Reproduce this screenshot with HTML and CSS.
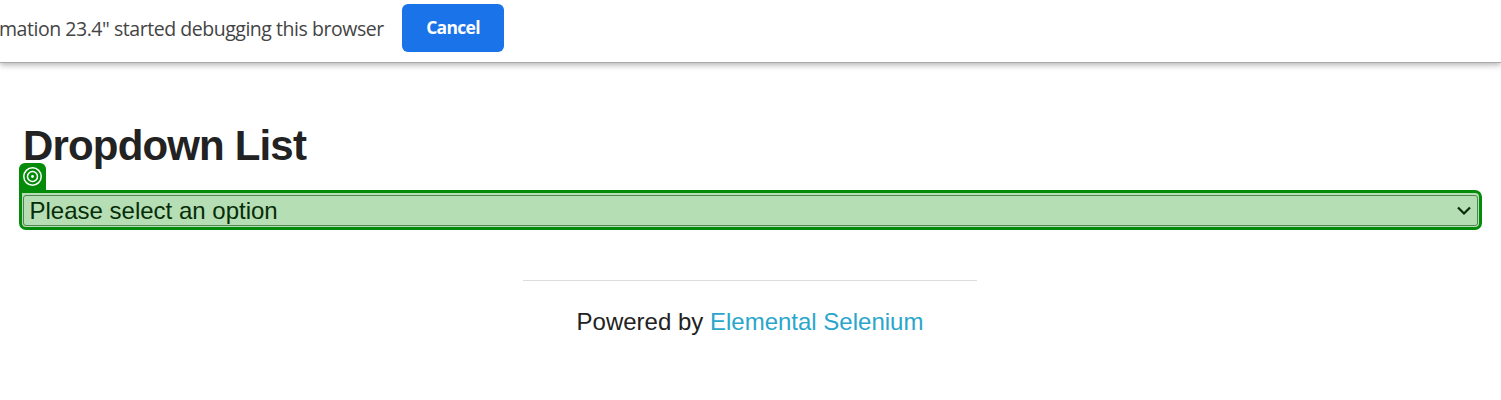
FILE: index.html
```html
<!DOCTYPE html>
<html lang="en">
<head>
<meta charset="utf-8">
<title>Dropdown List</title>
<link rel="stylesheet" href="styles.css">
</head>
<body>
<header class="infobar">
  <span class="infobar-text">mation 23.4" started debugging this browser</span>
  <button class="cancel">Cancel</button>
</header>
<main class="content">
  <h1 class="title">Dropdown List</h1>
  <div class="field">
    <span class="tag">
      <svg class="target" width="20" height="20" viewBox="0 0 20 20" fill="none" stroke="#fff"><circle cx="9.5" cy="9.5" r="8.7" stroke-width="1.5"/><circle cx="9.5" cy="9.5" r="5" stroke-width="1.5"/><circle cx="9.5" cy="9.5" r="1.4" fill="#fff" stroke="none"/></svg>
    </span>
    <div class="select">
      <span class="select-label">Please select an option</span>
      <svg class="chevron" width="16" height="10" viewBox="0 0 16 10" fill="none" stroke="#062d06" stroke-width="2.2"><path d="M2 1.5 L8 7.5 L14 1.5"/></svg>
    </div>
  </div>
</main>
<footer class="footer">
  <hr class="rule">
  <p class="powered">Powered by <a class="link">Elemental Selenium</a></p>
</footer>
</body>
</html>
```

FILE: styles.css
```css
* { box-sizing: border-box; }
body { margin: 0; background: #fff; color: #222; font-family: "Liberation Sans", Arial, sans-serif; height: 400px; overflow: hidden; }
.infobar { height: 63px; display: flex; align-items: flex-start; border-bottom: 1px solid #a8abaa; box-shadow: 0 2px 6px rgba(0,0,0,.3); }
.infobar-text { width: 402px; padding-top: 14px; font: 19.5px/30px "Open Sans", sans-serif; color: #444; white-space: nowrap; letter-spacing: -.46px; text-indent: -1px; }
.cancel { margin-top: 4px; width: 102px; height: 48px; padding: 0 0 2px; border: 0; border-radius: 6px; background: #1a73e8; color: #fff; font: 700 17.5px "Open Sans", sans-serif; letter-spacing: -.7px; }
.content { padding: 53px 19px 0; }
.title { margin: 0 0 0 4px; font-size: 42px; line-height: 60px; height: 74px; font-weight: 700; letter-spacing: -.84px; }
.field { position: relative; height: 40px; border: 3px solid #058b0a; border-radius: 0 7px 7px 7px; padding: 2px 1px 1px; background: #b5deb5; }
.tag { position: absolute; left: -3px; top: -30px; width: 27px; height: 30px; padding: 4px 3px 3px 4px; background: #058b0a; border-radius: 6px 6px 0 0; }
.target { display: block; }
.select { height: 31px; border: 1px solid #538254; border-radius: 3px; display: flex; align-items: center; justify-content: space-between; padding: 0 5px 0 5.5px; }
.select-label { color: #062d06; font-size: 24px; line-height: 30px; }
.footer { width: 454px; margin: 50px 0 0 523px; }
.rule { margin: 0; border: 0; border-top: 1px solid #ddd; }
.powered { margin: 23px 0 0; text-align: center; font-size: 24px; line-height: 36px; white-space: nowrap; }
.link { color: #2ba6cb; }
```
